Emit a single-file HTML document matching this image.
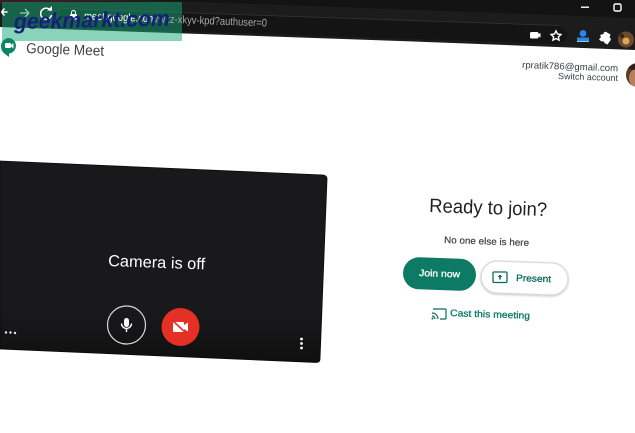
<!DOCTYPE html>
<html>
<head>
<meta charset="utf-8">
<style>
html,body{margin:0;padding:0;background:#fff;width:635px;height:433px;overflow:hidden}
body{position:relative;font-family:"Liberation Sans",sans-serif}
svg{position:absolute;left:0;top:0}
</style>
</head>
<body>
<svg width="635" height="433" viewBox="0 0 635 433" xmlns="http://www.w3.org/2000/svg" font-family="Liberation Sans, sans-serif">
<defs>
<linearGradient id="vg" x1="0" y1="0" x2="0" y2="1"><stop offset="0.75" stop-color="#19191b"/><stop offset="1" stop-color="#0f0f10"/></linearGradient>
<filter id="soft" x="-5%" y="-5%" width="110%" height="110%"><feGaussianBlur stdDeviation="0.3"/></filter>
</defs>
<!-- browser chrome -->
<polygon points="0,0 635,0 635,50 400,41 0,27" fill="#1c1c1d"/>
<polygon points="0,0 150,0 635,18 635,0" fill="#131313"/>
<polygon points="0,0 150,0 0,3" fill="#3a1c28"/>
<polygon points="60,9 560,26 567,33 567,38 560,44 60,27" fill="#141415"/>
<path d="M60 8.500L560 25.500" stroke="#333" stroke-width="0.800"/>
<!-- window controls -->
<rect x="581" y="6.500" width="8" height="1.400" fill="#fff"/>
<rect x="614" y="4" width="7" height="7" rx="1.500" fill="none" stroke="#fff" stroke-width="1.400"/>
<!-- watermark box -->
<rect x="2" y="2" width="180" height="39" fill="#14a878" opacity=".5"/>
<!-- url -->
<g filter="url(#soft)">
<text transform="rotate(2.200 84 19)" x="84" y="19.500" font-size="11" textLength="183" lengthAdjust="spacingAndGlyphs" fill="#fff">meet.google.com<tspan fill="#a8a8a8">/wzz-xkyv-kpd?authuser=0</tspan></text>
<path d="M1.500 12h6M1.500 12l3-3.500M1.500 12l3 3.500" stroke="#fff" stroke-width="1.500" fill="none"/>
<path d="M20 13h9M29 13l-4-4M29 13l-4 4" stroke="#9fc8b8" stroke-width="1.300" fill="none"/>
<path d="M51 11a5.500 5.500 0 1 0 .5 4" stroke="#fff" stroke-width="1.500" fill="none"/>
<path d="M47 10.500h5v-4.500z" fill="#fff"/>
<rect x="70" y="14" width="7" height="5.500" rx="1" fill="#fff"/>
<path d="M71.500 14v-1.500a2 2 0 0 1 4 0V14" stroke="#fff" fill="none"/>
</g>
<!-- watermark text -->
<text transform="rotate(-1.200 14 29)" x="14" y="29" font-size="22" font-style="italic" font-weight="bold" fill="#14207c" textLength="156" lengthAdjust="spacingAndGlyphs">geekmarkt.com</text>
<!-- toolbar icons -->
<rect x="530" y="32" width="8.500" height="6.500" rx="1.500" fill="#fff"/><path d="M538.500 34l2-1v4.500l-2-1z" fill="#fff"/>
<path d="M556 31l1.500 3 3.400.5-2.500 2.300.6 3.300-3-1.600-3 1.600.6-3.300-2.500-2.300 3.400-.5z" fill="none" stroke="#fff" stroke-width="1.400"/>
<circle cx="583" cy="33.500" r="3.400" fill="#2a86e8"/>
<rect x="577" y="37.500" width="12" height="3.500" fill="#2a86e8"/><rect x="577" y="41" width="12" height="1" fill="#9cc"/>
<path d="M600 35l3.500-1a2 2 0 0 1 3.500-1.500l3.500 2-1 3a2 2 0 0 1 .5 3.500l-2.500 3.500-3-1.500a2 2 0 0 0-3-1.500l-2.500-2 2-2.500z" fill="#fff"/>
<circle cx="626" cy="39.500" r="8" fill="#6e4a2c"/>
<circle cx="626" cy="41" r="3.500" fill="#e0a850"/>
<circle cx="622" cy="36" r="2" fill="#2c241e"/>
<!-- meet logo -->
<path d="M9 38a7.800 7.800 0 0 1 0 15.500V57l-5-3.800C2 51.500 1 49 1 46a8 8 0 0 1 8-8z" fill="#0b8566"/>
<rect x="5" y="43" width="6" height="5" rx="1" fill="#fff"/><path d="M11 45l2.500-2v5.500L11 46.500z" fill="#fff"/>
<text transform="rotate(2 26 53)" x="26" y="53" font-size="14.500" fill="#3c4043" textLength="78" lengthAdjust="spacingAndGlyphs">Google Meet</text>
<!-- account -->
<text transform="rotate(2 522 68)" x="522" y="68" font-size="9.500" fill="#3c4043" textLength="96" lengthAdjust="spacingAndGlyphs">rpratik786@gmail.com</text>
<text transform="rotate(2 558 79)" x="558" y="79" font-size="9" fill="#3c4043" textLength="60" lengthAdjust="spacingAndGlyphs">Switch account</text>
<clipPath id="av"><circle cx="638" cy="75" r="12"/></clipPath>
<circle cx="638" cy="75" r="12" fill="#5a3a28"/>
<g clip-path="url(#av)"><ellipse cx="636" cy="78" rx="7" ry="9" fill="#b5805e"/><ellipse cx="636" cy="66" rx="9" ry="4" fill="#2e2018"/></g>
<!-- video -->
<path d="M0 161 L323 175 Q327 175.500 327 179 L320 359 Q320 362.500 316 362.500 L0 349 Z" fill="url(#vg)" stroke="#0a0a0a" stroke-width="0.800"/>
<text transform="rotate(2 108 266)" x="108" y="266" font-size="16" fill="#fff" textLength="97" lengthAdjust="spacingAndGlyphs">Camera is off</text>
<circle cx="126.500" cy="325" r="19" fill="none" stroke="#d8d8d8" stroke-width="1.200"/>
<rect x="124" y="318" width="5" height="9" rx="2.500" fill="#fff"/>
<path d="M121.500 323.500a5 5 0 0 0 10 0M126.500 329v3" stroke="#fff" stroke-width="1.400" fill="none"/>
<circle cx="180.500" cy="327" r="19" fill="#e53125"/>
<rect x="173" y="322" width="11" height="10" rx="1" fill="#fff"/>
<path d="M184 325l4-2.500v9l-4-2.500z" fill="#fff"/>
<path d="M172 320l15 14" stroke="#e53125" stroke-width="1.600"/>
<circle cx="6" cy="332.500" r="1.200" fill="#d8f4f0"/><circle cx="10.500" cy="332.500" r="1.200" fill="#d8f4f0"/><circle cx="15" cy="333" r="1.200" fill="#d8f4f0"/>
<circle cx="301.500" cy="339" r="1.400" fill="#fff"/><circle cx="301.500" cy="343.500" r="1.400" fill="#fff"/><circle cx="301.500" cy="348" r="1.400" fill="#fff"/>
<!-- ready -->
<text transform="rotate(2 429 212)" x="429" y="212" font-size="19.500" fill="#202124" textLength="118" lengthAdjust="spacingAndGlyphs">Ready to join?</text>
<text transform="rotate(2 444 243)" x="444" y="243" font-size="9.500" fill="#3c4043" stroke="#3c4043" stroke-width="0.200" textLength="85" lengthAdjust="spacingAndGlyphs">No one else is here</text>
<!-- join -->
<rect x="403" y="258" width="73" height="32" rx="16" fill="#0d7a66" transform="rotate(2 439 274)"/>
<text transform="rotate(2 419 276)" x="419" y="276" font-size="9.500" fill="#fff" stroke="#fff" stroke-width="0.300" textLength="41" lengthAdjust="spacingAndGlyphs">Join now</text>
<!-- present -->
<rect x="481" y="262" width="87" height="32" rx="16" fill="#fff" stroke="#d8d8d8" stroke-width="1.200" transform="rotate(2 524 278)" style="filter:drop-shadow(0 1px 1px rgba(0,0,0,.2))"/>
<rect x="493" y="272" width="14" height="10.500" rx="1" fill="none" stroke="#0d6b5a" stroke-width="1.300"/>
<path d="M500 274.500l-2.500 2.500h1.700v2.500h1.600V277h1.700z" fill="#0d6b5a"/>
<text transform="rotate(2 516 281)" x="516" y="281" font-size="9.500" fill="#0d6b5a" stroke="#0d6b5a" stroke-width="0.300" textLength="35" lengthAdjust="spacingAndGlyphs">Present</text>
<!-- cast -->
<path d="M433 309h12a1 1 0 0 1 1 1v8a1 1 0 0 1-1 1h-5" fill="none" stroke="#0d6b5a" stroke-width="1.200"/>
<path d="M432 313a6 6 0 0 1 6 6M432 316a3 3 0 0 1 3 3" fill="none" stroke="#0d6b5a" stroke-width="1.200"/><circle cx="432.500" cy="318.500" r="1" fill="#0d6b5a"/>
<text transform="rotate(2 450 316)" x="450" y="316" font-size="9.500" fill="#0d7a66" stroke="#0d7a66" stroke-width="0.300" textLength="80" lengthAdjust="spacingAndGlyphs">Cast this meeting</text>
</svg>
</body>
</html>
